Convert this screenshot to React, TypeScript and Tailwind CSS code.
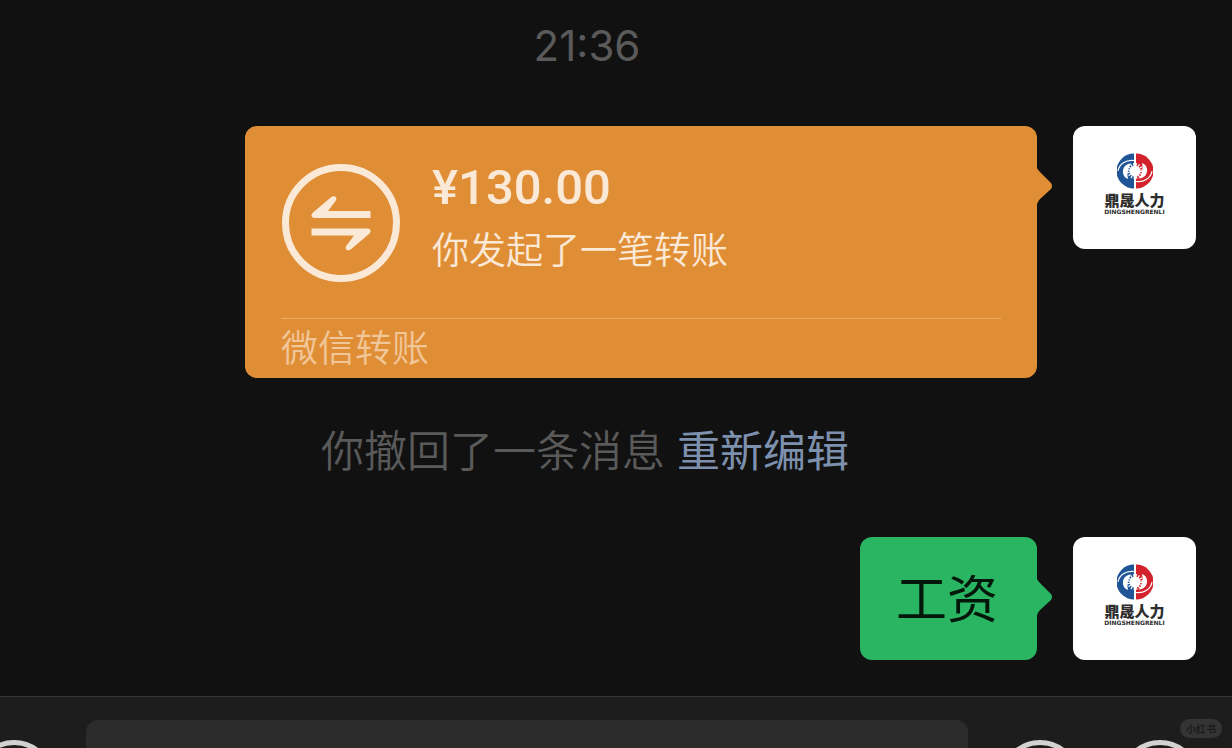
import type { ReactNode } from "react";

function Emblem() {
  return (
    <svg viewBox="0 0 36 36" className="size-9" aria-hidden="true">
      <path d="M17 0.500A17.500 17.500 0 0 0 17 35.500Z" fill="#1f5596" />
      <path d="M19 0.500A17.500 17.500 0 0 1 19 35.500Z" fill="#d3222b" />
      <path d="M1 18C2 11 9 6.500 17 7.500" fill="none" stroke="#fff" strokeWidth="1.2" />
      <path d="M35 18C34 25 27 29.500 19 28.500" fill="none" stroke="#fff" strokeWidth="1.2" />
      <path d="M14 10.500C8 11 5.500 15 6 20C6.500 23 8 25 11 26Q9 18 14 10.500Z" fill="#fff" />
      <path d="M22 25.500C28 25 30.500 21 30 16C29.500 13 28 11 25 10Q27 18 22 25.500Z" fill="#fff" />
      <circle cx="18" cy="18" r="6.500" fill="none" stroke="#fff" strokeWidth="3" strokeDasharray="1.1 1.450" />
      <circle cx="18" cy="18" r="5.500" fill="#fff" />
      <path d="M18 0V36" stroke="#fff" strokeWidth="2" />
    </svg>
  );
}

function Avatar() {
  return (
    <div className="flex size-[123px] shrink-0 flex-col items-center rounded-xl bg-white pt-[27px] text-[#2d2d2d]">
      <Emblem />
      <p className="mt-[3px] font-['Noto_Sans_CJK_SC',sans-serif] text-[15px] leading-4 font-black">鼎晟人力</p>
      <p className="mt-px font-['DejaVu_Sans',sans-serif] text-[6px] leading-[6px] font-bold">DINGSHENGRENLI</p>
    </div>
  );
}

function Tail({ className }: { className: string }) {
  return (
    <svg viewBox="0 0 16 36" className={`absolute top-[42px] left-full h-9 w-4 ${className}`} aria-hidden="true">
      <path d="M-1 0H0Q1 2 3 4L14 15Q16 18 14 21L3 31Q1 33 0 36H-1Z" fill="currentColor" />
    </svg>
  );
}

function Message({ children }: { children: ReactNode }) {
  return (
    <div className="flex items-start justify-end gap-9 pr-9">
      {children}
      <Avatar />
    </div>
  );
}

const ARROW = "M88.500 47H46L53.500 37Q55.500 34 53 32.500Q51 31.500 49 33.200L31 48.500Q28.500 51 30 53Q31 54 33 54H88.500Z";

function TransferIcon() {
  return (
    <svg viewBox="0 0 118 118" className="size-[118px] shrink-0" aria-hidden="true">
      <circle cx="59" cy="59" r="55.500" fill="none" stroke="#fbe9d7" strokeWidth="7" />
      <path d={ARROW} fill="#fbe9d7" />
      <path d={ARROW} fill="#fbe9d7" transform="rotate(180 59 59.200)" />
    </svg>
  );
}

function RoundButton({ label, className = "" }: { label: string; className?: string }) {
  return (
    <button
      type="button"
      aria-label={label}
      className={`size-20 shrink-0 rounded-full border-[5px] border-[#d2d2d2] ${className}`}
    />
  );
}

export default function App() {
  return (
    <div className="relative flex h-screen flex-col overflow-hidden bg-[#111111] font-['Noto_Sans_CJK_SC',sans-serif] font-[350]">
      <main className="shrink-0 pt-5 pb-9">
        <p className="pr-[58px] text-center font-['Inter',sans-serif] text-[42px] leading-[52px] font-normal text-[#5a5a5a]">
          21:36
        </p>

        <div className="mt-[54px]">
          <Message>
            <section className="relative w-[792px] rounded-xl bg-[#e08e36] px-9 pt-[38px] text-[#fbe9d7]">
              <div className="flex gap-8 pl-px">
                <TransferIcon />
                <div>
                  <p className="font-['Roboto',sans-serif] text-[49px] leading-[48px] font-medium">¥130.00</p>
                  <p className="mt-2.5 text-[37px] leading-[52px]">你发起了一笔转账</p>
                </div>
              </div>
              <p className="mt-9 border-t border-[#e9ab69] pb-1 text-[37px] leading-[55px] text-[#f1c698]">微信转账</p>
              <Tail className="text-[#e08e36]" />
            </section>
          </Message>
        </div>

        <p className="mt-[42px] pr-[62px] text-center text-[43px] leading-[56px] text-[#5a5a5a]">
          你撤回了一条消息
          <a href="#edit" className="ml-3 font-normal text-[#7d90ad]">
            重新编辑
          </a>
        </p>

        <div className="mt-[61px]">
          <Message>
            <p className="relative rounded-xl bg-[#29b561] pr-[39px] pb-1 pl-9 text-[51px] leading-[119px] font-normal text-[#04170b]">
              工资
              <Tail className="text-[#29b561]" />
            </p>
          </Message>
        </div>
      </main>

      <footer className="flex shrink-0 items-center gap-8 border-t border-[#343434] bg-[#1d1d1d] pt-[23px] pr-8">
        <RoundButton label="语音" className="-ml-[26px]" />
        <input
          aria-label="消息"
          className="h-[120px] min-w-0 flex-1 rounded-xl bg-[#2c2c2c] px-6 text-[42px] text-white outline-none"
        />
        <div className="flex gap-10">
          <RoundButton label="表情" />
          <RoundButton label="更多" />
        </div>
      </footer>

      <span className="absolute right-[10px] bottom-[10px] rounded-full bg-[#343434] px-[6px] text-[10px] leading-[19px] font-bold text-[#1b1b1b]">
        小红书
      </span>
    </div>
  );
}
